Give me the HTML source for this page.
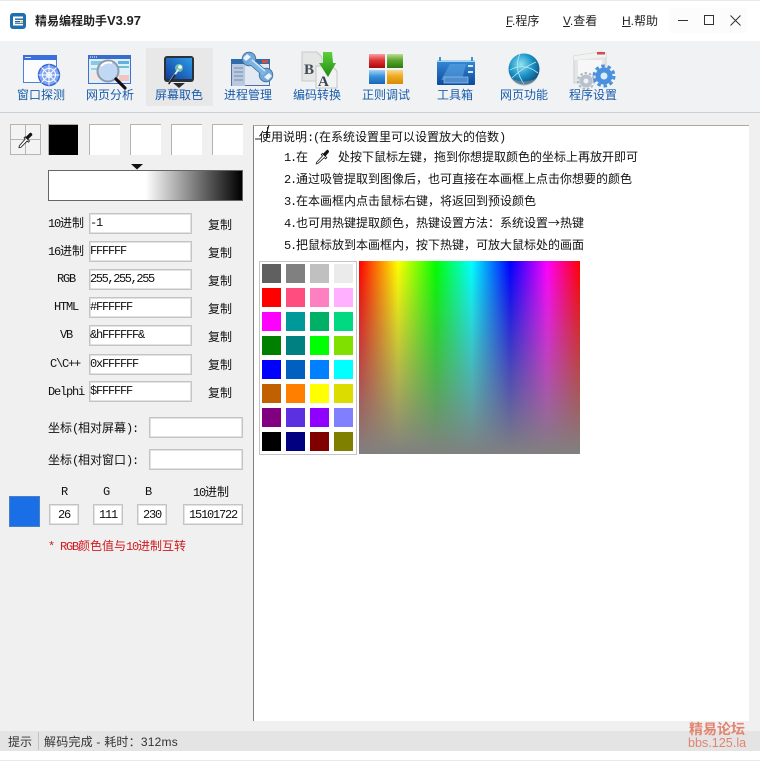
<!DOCTYPE html>
<html lang="zh"><head><meta charset="utf-8"><title>精易编程助手</title>
<style>
*{box-sizing:border-box}
html,body{margin:0;padding:0;width:760px;height:761px;overflow:hidden;background:#f0f0f0}
#r{position:relative;width:760px;height:761px;overflow:hidden;font:12px/14px "WenQuanYi Zen Hei","Noto Sans CJK SC",sans-serif;color:#111}
#r div{position:absolute;white-space:nowrap}
.b{background:#fff;border:1px solid #c4c4c4;box-shadow:inset 0 0 0 1px #e2e2e2;height:21px}
.t{height:14px;line-height:14px}
.tb{color:#1a5cab;font:12px/14px "Liberation Sans","Noto Sans CJK SC",sans-serif;width:68px;text-align:center;top:88px}
.m{font-family:"Liberation Mono",monospace;letter-spacing:-1.2px}
.c{text-align:center}
.s{width:19px;height:19px}
.sw{width:31px;height:31px;background:#fff;border-left:1px solid #b4b4b4;border-top:1px solid #b4b4b4}
.menu{font:12px/14px "Liberation Sans","Noto Sans CJK SC",sans-serif;color:#222;top:14px}
u{text-decoration:underline}
</style></head><body><div id="r">
<div style="left:0;top:0;width:760px;height:41px;background:#fff;border-top:1px solid #e8e8e8"></div>
<div style="left:670px;top:8px;width:77px;height:25px;background:#fcfcfc"></div>
<div style="left:0;top:41px;width:760px;height:71px;background:#f1f2f3"></div>
<div style="left:0;top:112px;width:760px;height:1px;background:#c6d0d6"></div>
<div style="left:146px;top:48px;width:67px;height:58px;background:#e8e8e8"></div>

<div style="left:35px;top:14px;font:bold 12px/14px 'Liberation Sans','Noto Sans CJK SC',sans-serif;color:#222">精易编程助手<span style="font-size:13px">V3.97</span></div>
<div class="menu" style="left:506px"><u>F</u>.程序</div>
<div class="menu" style="left:563px"><u>V</u>.查看</div>
<div class="menu" style="left:622px"><u>H</u>.帮助</div>

<div class="tb" style="left:7px">窗口探测</div>
<div class="tb" style="left:76px">网页分析</div>
<div class="tb" style="left:145px">屏幕取色</div>
<div class="tb" style="left:214px">进程管理</div>
<div class="tb" style="left:283px">编码转换</div>
<div class="tb" style="left:352px">正则调试</div>
<div class="tb" style="left:421px">工具箱</div>
<div class="tb" style="left:490px">网页功能</div>
<div class="tb" style="left:559px">程序设置</div>

<!-- left panel -->
<div style="left:10px;top:124px;width:31px;height:31px;border:1px solid #b5b5b5;background:#f3f3f3"></div>
<div style="left:48px;top:124px;width:30px;height:31px;background:#000;border-left:1px solid #aaa;border-top:1px solid #aaa"></div>
<div class="sw" style="left:89px;top:124px"></div>
<div class="sw" style="left:130px;top:124px"></div>
<div class="sw" style="left:171px;top:124px"></div>
<div class="sw" style="left:212px;top:124px"></div>
<div style="left:48px;top:170px;width:195px;height:31px;border:1px solid #666;background:linear-gradient(90deg,#fff 0,#fff 50%,#000 100%)"></div>

<div class="t" style="left:48px;top:216px"><span class="m">10</span>进制</div>
<div class="t" style="left:48px;top:244px"><span class="m">16</span>进制</div>
<div class="t m" style="left:57px;top:272px">RGB</div>
<div class="t m" style="left:54px;top:300px">HTML</div>
<div class="t m" style="left:60px;top:328px">VB</div>
<div class="t m" style="left:50px;top:357px">C\C++</div>
<div class="t m" style="left:48px;top:385px">Delphi</div>

<div class="b" style="left:89px;top:213px;width:103px"></div>
<div class="b" style="left:89px;top:241px;width:103px"></div>
<div class="b" style="left:89px;top:269px;width:103px"></div>
<div class="b" style="left:89px;top:297px;width:103px"></div>
<div class="b" style="left:89px;top:325px;width:103px"></div>
<div class="b" style="left:89px;top:354px;width:103px"></div>
<div class="b" style="left:89px;top:381px;width:103px"></div>
<div class="t m" style="left:90px;top:216px">-1</div>
<div class="t m" style="left:90px;top:244px">FFFFFF</div>
<div class="t m" style="left:90px;top:272px;letter-spacing:-1.4px">255,255,255</div>
<div class="t m" style="left:90px;top:300px">#FFFFFF</div>
<div class="t m" style="left:90px;top:328px">&amp;hFFFFFF&amp;</div>
<div class="t m" style="left:90px;top:357px">0xFFFFFF</div>
<div class="t m" style="left:90px;top:384px">$FFFFFF</div>

<div class="t" style="left:208px;top:218px">复制</div>
<div class="t" style="left:208px;top:246px">复制</div>
<div class="t" style="left:208px;top:274px">复制</div>
<div class="t" style="left:208px;top:302px">复制</div>
<div class="t" style="left:208px;top:330px">复制</div>
<div class="t" style="left:208px;top:358px">复制</div>
<div class="t" style="left:208px;top:386px">复制</div>

<div class="t" style="left:48px;top:421px">坐标<span class="m">(</span>相对屏幕<span class="m">):</span></div>
<div class="b" style="left:149px;top:417px;width:94px"></div>
<div class="t" style="left:48px;top:453px">坐标<span class="m">(</span>相对窗口<span class="m">):</span></div>
<div class="b" style="left:149px;top:449px;width:94px"></div>

<div style="left:9px;top:496px;width:31px;height:31px;background:#1a6fe6;border:1px solid #4a7fc0"></div>
<div class="t m c" style="left:49px;top:485px;width:30px">R</div>
<div class="t m c" style="left:91px;top:485px;width:30px">G</div>
<div class="t m c" style="left:133px;top:485px;width:30px">B</div>
<div class="t c" style="left:183px;top:485px;width:56px"><span class="m">10</span>进制</div>
<div class="b" style="left:49px;top:504px;width:30px"></div>
<div class="b" style="left:93px;top:504px;width:30px"></div>
<div class="b" style="left:137px;top:504px;width:30px"></div>
<div class="b" style="left:183px;top:504px;width:60px"></div>
<div class="t m c" style="left:49px;top:508px;width:30px">26</div>
<div class="t m c" style="left:93px;top:508px;width:30px">111</div>
<div class="t m c" style="left:137px;top:508px;width:30px">230</div>
<div class="t m c" style="left:183px;top:508px;width:60px">15101722</div>
<div class="t" style="left:48px;top:539px;color:#cf1a1f"><span class="m">* RGB</span>颜色值与<span class="m">10</span>进制互转</div>

<!-- canvas -->
<div style="left:253px;top:125px;width:496px;height:596px;background:#fff;border-left:1px solid #7f7f7f;border-top:1px solid #a8a8a8"></div>
<div class="t" style="left:259px;top:130px">使用说明<span class="m">:(</span>在系统设置里可以设置放大的倍数<span class="m">)</span></div>
<div class="t" style="left:284px;top:150px"><span class="m">1.</span>在</div>
<div class="t" style="left:338px;top:150px">处按下鼠标左键，拖到你想提取颜色的坐标上再放开即可</div>
<div class="t" style="left:284px;top:172px"><span class="m">2.</span>通过吸管提取到图像后，也可直接在本画框上点击你想要的颜色</div>
<div class="t" style="left:284px;top:194px"><span class="m">3.</span>在本画框内点击鼠标右键，将返回到预设颜色</div>
<div class="t" style="left:284px;top:216px"><span class="m">4.</span>也可用热键提取颜色，热键设置方法：系统设置→热键</div>
<div class="t" style="left:284px;top:238px"><span class="m">5.</span>把鼠标放到本画框内，按下热键，可放大鼠标处的画面</div>

<div style="left:259px;top:261px;width:98px;height:194px;background:#fff;border:1px solid #c4c4c4"></div>
<div class="s" style="left:262px;top:264px;background:#606060"></div><div class="s" style="left:286px;top:264px;background:#808080"></div><div class="s" style="left:310px;top:264px;background:#c0c0c0"></div><div class="s" style="left:334px;top:264px;background:#ebebeb"></div>
<div class="s" style="left:262px;top:288px;background:#ff0000"></div><div class="s" style="left:286px;top:288px;background:#ff4d80"></div><div class="s" style="left:310px;top:288px;background:#ff80c0"></div><div class="s" style="left:334px;top:288px;background:#ffb0ff"></div>
<div class="s" style="left:262px;top:312px;background:#ff00ff"></div><div class="s" style="left:286px;top:312px;background:#009999"></div><div class="s" style="left:310px;top:312px;background:#00b066"></div><div class="s" style="left:334px;top:312px;background:#00d980"></div>
<div class="s" style="left:262px;top:336px;background:#008000"></div><div class="s" style="left:286px;top:336px;background:#008080"></div><div class="s" style="left:310px;top:336px;background:#00ff00"></div><div class="s" style="left:334px;top:336px;background:#80e000"></div>
<div class="s" style="left:262px;top:360px;background:#0000ff"></div><div class="s" style="left:286px;top:360px;background:#0060c0"></div><div class="s" style="left:310px;top:360px;background:#0080ff"></div><div class="s" style="left:334px;top:360px;background:#00ffff"></div>
<div class="s" style="left:262px;top:384px;background:#c06000"></div><div class="s" style="left:286px;top:384px;background:#ff8000"></div><div class="s" style="left:310px;top:384px;background:#ffff00"></div><div class="s" style="left:334px;top:384px;background:#dcdc00"></div>
<div class="s" style="left:262px;top:408px;background:#800080"></div><div class="s" style="left:286px;top:408px;background:#5a30e0"></div><div class="s" style="left:310px;top:408px;background:#9000ff"></div><div class="s" style="left:334px;top:408px;background:#8080ff"></div>
<div class="s" style="left:262px;top:432px;background:#000"></div><div class="s" style="left:286px;top:432px;background:#000080"></div><div class="s" style="left:310px;top:432px;background:#800000"></div><div class="s" style="left:334px;top:432px;background:#808000"></div>

<div style="left:359px;top:261px;width:221px;height:193px;background:linear-gradient(180deg,rgba(128,128,128,0),#808080),linear-gradient(90deg,#f00 0,#ff0 17.6%,#0f0 34.8%,#0ff 51%,#00f 68.4%,#f0f 85.2%,#f00 100%)"></div>

<!-- status -->
<div style="left:0;top:731px;width:760px;height:20px;background:#e4e4e4"></div>
<div style="left:0;top:751px;width:760px;height:9px;background:#fff"></div>
<div style="left:0;top:760px;width:760px;height:1px;background:#e8e8e8"></div>
<div style="left:38px;top:732px;width:1px;height:18px;background:#c2c2c2"></div>
<div style="left:8px;top:735px;font:12px/14px 'Liberation Sans','Noto Sans CJK SC',sans-serif;color:#333">提示</div>
<div style="left:44px;top:735px;font:12px/14px 'Liberation Sans','Noto Sans CJK SC',sans-serif;color:#333;letter-spacing:.22px">解码完成 - 耗时：312ms</div>
<div style="left:689px;top:722px;font:bold 14px/15px 'Noto Sans CJK SC',sans-serif;color:#e2846f">精易论坛</div>
<div style="left:688px;top:736px;font:12.6px/15px 'Liberation Sans',sans-serif;color:#e2846f">bbs.125.la</div>

<svg width="760" height="761" viewBox="0 0 760 761" style="position:absolute;left:0;top:0;pointer-events:none">
<defs>
<linearGradient id="g1" x1="0" y1="0" x2="0" y2="1"><stop offset="0" stop-color="#3a8ad8"/><stop offset="1" stop-color="#0c4a9c"/></linearGradient>
<linearGradient id="g2" x1="0" y1="1" x2="1" y2="0"><stop offset="0" stop-color="#0f3d9c"/><stop offset="1" stop-color="#2f9ce8"/></linearGradient>
<radialGradient id="g3" cx=".4" cy=".35" r=".75"><stop offset="0" stop-color="#8fe6f2"/><stop offset=".5" stop-color="#1b93c8"/><stop offset="1" stop-color="#0b3d68"/></radialGradient>
<linearGradient id="gr" x1="0" y1="0" x2="0" y2="1"><stop offset="0" stop-color="#f7a0a0"/><stop offset=".45" stop-color="#e03434"/><stop offset="1" stop-color="#a80a0a"/></linearGradient>
<linearGradient id="gg" x1="0" y1="0" x2="0" y2="1"><stop offset="0" stop-color="#b9de95"/><stop offset=".45" stop-color="#5ca52d"/><stop offset="1" stop-color="#2d7a10"/></linearGradient>
<linearGradient id="gb" x1="0" y1="0" x2="0" y2="1"><stop offset="0" stop-color="#a8d4f5"/><stop offset=".45" stop-color="#3a92dc"/><stop offset="1" stop-color="#1764b8"/></linearGradient>
<linearGradient id="gy" x1="0" y1="0" x2="0" y2="1"><stop offset="0" stop-color="#f8da90"/><stop offset=".45" stop-color="#eeaa20"/><stop offset="1" stop-color="#d88a08"/></linearGradient>
<linearGradient id="ga" x1="0" y1="0" x2="0" y2="1"><stop offset="0" stop-color="#5ed03a"/><stop offset="1" stop-color="#1f8a12"/></linearGradient>
</defs>

<!-- app icon -->
<rect x="10" y="13" width="16" height="16" rx="3" fill="#1d6fb0"/>
<rect x="13" y="16.5" width="10" height="9" fill="#fff"/>
<path d="M15 18.5h8v1.4h-8zM15 21h5v1.4h-5zM15 23h8v.8h-8z" fill="#1d5f96"/>
<rect x="20.5" y="20.8" width="2.5" height="1.8" fill="#e9b520"/>

<!-- 1 window + radar -->
<rect x="23.5" y="55.5" width="33" height="27" fill="#fbfcff" stroke="#4f7fe0"/>
<rect x="23" y="55" width="34" height="5" fill="#3a6fdc"/>
<rect x="25" y="57" width="6" height="1" fill="#cfe0ff"/>
<circle cx="49" cy="75" r="10.5" fill="#7fa6f0" stroke="#3764d8" stroke-width="1.4"/>
<circle cx="49" cy="75" r="6.5" fill="none" stroke="#fff"/>
<circle cx="49" cy="75" r="2.5" fill="none" stroke="#fff"/>
<path d="M38.5 75h21M49 64.500v21M41.500 67.500l15 15M56.500 67.500l-15 15" stroke="#fff" stroke-width="1"/>

<!-- 2 web analysis -->
<rect x="88.500" y="55.500" width="42" height="28" fill="#dff0fa" stroke="#3f72cc"/>
<rect x="88" y="55" width="43" height="4" fill="#3a6ccc"/>
<path d="M90 57h8" stroke="#fff" stroke-dasharray="1 1"/>
<rect x="91" y="61" width="15" height="4" fill="#86c6e8"/>
<rect x="118" y="61" width="11" height="3" fill="#5fb2e0"/>
<rect x="118" y="66" width="11" height="2" fill="#6cc0dc"/>
<rect x="91" y="68" width="8" height="2" fill="#98d0e8"/>
<rect x="91" y="73" width="7" height="7" fill="#f6e6e0"/>
<rect x="119" y="75" width="10" height="6" fill="#f3c2c2"/>
<circle cx="108" cy="71" r="10.500" fill="#bcd4f2" fill-opacity=".85" stroke="#8c9aac" stroke-width="2"/>
<path d="M101 66q5-5 11-3" stroke="#fff" stroke-width="2" fill="none"/>
<path d="M116 79l9 9" stroke="#111" stroke-width="3.200" stroke-linecap="round"/>

<!-- 3 screen color -->
<path d="M179 88l-6-5h12z" fill="#2a2a2a"/>
<rect x="164" y="56" width="30" height="26" rx="3" fill="#2b3138"/>
<rect x="166" y="58" width="26" height="21" fill="url(#g2)"/>
<circle cx="179" cy="68" r="4" fill="#7fd2a8" fill-opacity=".8"/>
<circle cx="180" cy="67" r="1.800" fill="#fff"/>
<path d="M178 70l-9 13" stroke="#e8e8e8" stroke-width="1.800" stroke-linecap="round"/>
<path d="M175 75l-6 8.500" stroke="#222" stroke-width="1.600" stroke-linecap="round"/>

<!-- 4 process -->
<rect x="231.500" y="60.500" width="38" height="25" fill="#e3e9f2" stroke="#4f6f9e"/>
<rect x="231" y="59" width="39" height="5" fill="#2f6daa"/>
<rect x="232" y="64" width="13" height="22" fill="#bac9de"/>
<path d="M234 68h9M234 72h9M234 76h9M234 80h9" stroke="#6e8bb4"/>
<rect x="262" y="60" width="6" height="3" fill="#d84c44"/>
<path d="M250 60.500l15 13" stroke="#3d6d9e" stroke-width="7"/>
<circle cx="249" cy="59" r="6.800" fill="#6fa9dc" stroke="#3d6d9e" stroke-width=".8"/>
<circle cx="266" cy="75" r="6.800" fill="#6fa9dc" stroke="#3d6d9e" stroke-width=".8"/>
<path d="M250 60.500l15 13" stroke="#7db4e4" stroke-width="5.500"/>
<path d="M247 54l-4 4 3 3 5-4zM268 80l4-4-3-3-5 4z" fill="#f1f2f3"/>
<path d="M252 60l13 11" stroke="#cfe6f8" stroke-width="1.500"/>

<!-- 5 encode -->
<path d="M302 52h15l5 5v24h-20z" fill="#e5e6e6" stroke="#c9c9c9"/>
<text x="304" y="74" font-family="Liberation Serif" font-weight="bold" font-size="15" fill="#404a55">B</text>
<path d="M316 66h16l5 5v17h-21z" fill="#f1f2f2" stroke="#c6c6c6"/>
<text x="318" y="86" font-family="Liberation Serif" font-weight="bold" font-size="15" fill="#3a4450">A</text>
<path d="M323 52h9l1 11h3l-8 14-9-14h4z" fill="url(#ga)"/>

<!-- 6 regex -->
<rect x="369" y="54" width="16" height="14" fill="url(#gr)"/>
<rect x="387" y="54" width="16" height="14" fill="url(#gg)"/>
<rect x="369" y="70" width="16" height="14" fill="url(#gb)"/>
<rect x="387" y="70" width="16" height="14" fill="url(#gy)"/>

<!-- 7 toolbox -->
<rect x="437" y="60" width="38" height="25" rx="1" fill="url(#g1)"/>
<rect x="437" y="60" width="38" height="2" fill="#a8d4f4"/>
<rect x="439" y="57" width="2" height="4" fill="#4a8fd0"/><rect x="471" y="57" width="2" height="4" fill="#4a8fd0"/>
<path d="M441 80l9-16h16l-4 16z" fill="#5ea9e6" fill-opacity=".55"/>
<rect x="444" y="77" width="24" height="6" fill="#4f8cd0" stroke="#98c2ea" stroke-width=".7"/>
<rect x="468" y="65" width="5" height="2" fill="#d7e8f6"/><rect x="468" y="71" width="5" height="2" fill="#d7e8f6"/>

<!-- 8 globe -->
<circle cx="524" cy="69" r="15.500" fill="url(#g3)"/>
<path d="M510 70q14-8 28 3M512 78q10-10 24-16M520 54q-7 14 4 30" stroke="#bfe6f4" stroke-width=".8" fill="none"/>
<path d="M511 78a15 15 0 0 0 26 0q-13 7-26 0z" fill="#8d9aa6" fill-opacity=".6"/>

<!-- 9 settings -->
<path d="M574 56l27-4 5 1v28l-32 2z" fill="#e4e5e5" stroke="#cfcfcf"/>
<path d="M574 56l27-4 5 1v4l-32 3z" fill="#f2f2f2"/>
<rect x="597" y="52" width="8" height="2.500" fill="#d24c4c"/>
<rect x="578" y="60" width="24" height="17" fill="#f7f7f7"/>
<circle cx="586" cy="81" r="6.500" fill="#b9c2cc"/>
<circle cx="586" cy="81" r="8" fill="none" stroke="#aeb8c4" stroke-width="2" stroke-dasharray="2.500 2"/>
<circle cx="586" cy="81" r="2.500" fill="#eef2f6"/>
<circle cx="604" cy="76" r="8.500" fill="#4a90dc"/>
<circle cx="604" cy="76" r="10" fill="none" stroke="#4a90dc" stroke-width="3" stroke-dasharray="3.500 2.800"/>
<circle cx="604" cy="76" r="3.500" fill="#d8ecfa"/>

<!-- window controls -->
<path d="M678 20.500h10" stroke="#333" stroke-width="1"/>
<rect x="704.500" y="15.500" width="9" height="9" fill="none" stroke="#333"/>
<path d="M730.500 15.500l10 10M740.500 15.500l-10 10" stroke="#333" stroke-width="1"/>

<!-- eyedropper box -->
<path d="M25.500 125v29M11 139.500h29" stroke="#b5b5b5"/>
<g transform="translate(7.300 33) scale(.78)">
<path d="M23 133l-1.500 1.500 1.500 1.500-7.500 8.500-.5 2.500 2.500-.5 8-8 1.500 1.500 1.500-1.500z" fill="#fff" stroke="#222" stroke-width="1.100"/>
<path d="M26 137l-3-3 6-6c1-1 3.500 1.500 3 3z" fill="#111"/>
</g>

<!-- triangle -->
<path d="M131 164h12l-6 5.500z" fill="#111"/>

<!-- cursor -->
<path d="M267.500 127v11M255 139h7" stroke="#222" stroke-width="1"/>
<path d="M269 125l-1.500 5" stroke="#222"/>

<!-- inline dropper -->
<g transform="translate(48 25) scale(.85)">
<path d="M323 151l-1.500 1.500 1.500 1.500-7 7.500-.5 2 2-.5 7.500-7 1.500 1.500 1.500-1.500z" fill="#fff" stroke="#222" stroke-width="1"/>
<path d="M326 155l-3-3 5-5c1-1 3 1 2.500 2.500z" fill="#111"/>
</g>
</svg>
</div></body></html>
